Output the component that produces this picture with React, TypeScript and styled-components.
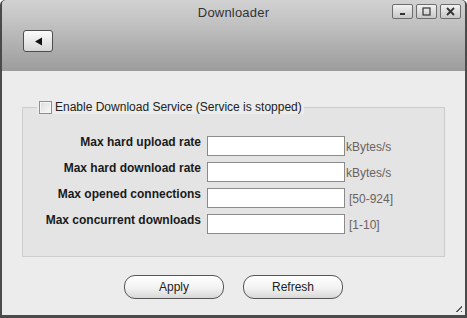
import styled, { createGlobalStyle } from "styled-components";

const Global = createGlobalStyle`
  html, body { margin: 0; padding: 0; background: #fff; }
  body { font-family: "Liberation Sans", Arial, sans-serif; }
`;

const Window = styled.div`
  width: 467px;
  height: 318px;
  box-sizing: border-box;
  display: flex;
  flex-direction: column;
  background: #4a4a4a;
  border-radius: 5px 5px 0 0;
  padding: 0 2px 3px 2px;
  overflow: hidden;
`;

const Header = styled.div`
  height: 71px;
  background: linear-gradient(#d2d2d2, #c3c3c3 30%, #9c9c9c);
  border-radius: 4px 4px 0 0;
  display: flex;
  flex-direction: column;
`;

const TitleBar = styled.div`
  height: 24px;
  display: flex;
  align-items: center;
  justify-content: center;
  position: relative;
  font-size: 13px;
  color: #333;
  letter-spacing: 0.2px;
`;

const WinControls = styled.div`
  position: absolute;
  right: 4px;
  top: 4px;
  display: flex;
  gap: 3px;
`;

const WinButton = styled.div`
  width: 21px;
  height: 15px;
  box-sizing: border-box;
  border: 1px solid #6d6d6d;
  border-radius: 2px;
  background: linear-gradient(#f2f2f2, #c8c8c8);
  display: flex;
  align-items: center;
  justify-content: center;
`;

const Toolbar = styled.div`
  padding: 6px 0 0 21px;
`;

const BackButton = styled.div`
  width: 30px;
  height: 22px;
  box-sizing: border-box;
  border: 1px solid #4d4d4d;
  border-radius: 3px;
  background: linear-gradient(#fbfbfb, #d6d6d6);
  display: flex;
  align-items: center;
  justify-content: center;
`;

const Content = styled.div`
  flex: 1;
  position: relative;
  background: #ececec;
  display: flex;
  flex-direction: column;
  padding: 29px 20px 0 20px;
`;

const Fieldset = styled.fieldset`
  margin: 0;
  padding: 22px 0 16px 0;
  border: 1px solid #cdcdcd;
  background: #e4e4e4;
  height: 157px;
  box-sizing: border-box;
  display: flex;
  flex-direction: column;
  gap: 6px;
`;

const Legend = styled.legend`
  margin-left: 14px;
  padding: 0 2px;
  display: flex;
  align-items: center;
  gap: 3px;
  font-size: 12px;
  color: #222;
  background: #ececec;
`;

const Check = styled.span`
  width: 11px;
  height: 11px;
  border: 1px solid #8e8e8e;
  background: linear-gradient(135deg, #dcdcdc, #fafafa);
  box-shadow: inset 0 0 0 1px #f4f4f4;
  display: inline-block;
`;

const Row = styled.div`
  display: grid;
  grid-template-columns: 184px 138px auto;
  align-items: center;
  height: 20px;
`;

const Label = styled.label`
  text-align: right;
  padding-right: 6px;
  font-size: 12px;
  font-weight: bold;
  color: #1a1a1a;
  transform: translateY(-4px);
`;

const Field = styled.input`
  width: 138px;
  height: 20px;
  box-sizing: border-box;
  border: 1px solid #8a8a8a;
  background: #fff;
  margin: 0;
`;

const Unit = styled.span<{ $pad?: number }>`
  font-size: 12px;
  color: #6a6360;
  margin-left: ${(p) => p.$pad ?? 0}px;
  margin-top: 2px;
`;

const Actions = styled.div`
  display: flex;
  justify-content: center;
  gap: 19px;
  padding-top: 18px;
`;

const PillButton = styled.button`
  width: 100px;
  height: 24px;
  border: 1px solid #555;
  border-radius: 11px;
  background: linear-gradient(#ffffff, #f2f2f2 55%, #d8d8d8);
  font-family: "Liberation Sans", Arial, sans-serif;
  font-size: 12px;
  color: #222;
  padding: 0;
`;

const Grip = styled.div`
  position: absolute;
  right: 3px;
  bottom: 3px;
  width: 8px;
  height: 8px;
  background: repeating-linear-gradient(135deg, transparent 0 1px, #555 1px 2px, transparent 2px 3px);
  clip-path: polygon(100% 0, 100% 100%, 0 100%);
`;

const rows = [
  { label: "Max hard upload rate", unit: "kBytes/s", pad: 1 },
  { label: "Max hard download rate", unit: "kBytes/s", pad: 1 },
  { label: "Max opened connections", unit: "[50-924]", pad: 4 },
  { label: "Max concurrent downloads", unit: "[1-10]", pad: 4 },
];

export default function App() {
  return (
    <>
      <Global />
      <Window>
        <Header>
          <TitleBar>
            Downloader
            <WinControls>
              <WinButton>
                <svg width="9" height="9" viewBox="0 0 9 9">
                  <rect x="2" y="6" width="5" height="2" fill="#333" />
                </svg>
              </WinButton>
              <WinButton>
                <svg width="9" height="9" viewBox="0 0 9 9">
                  <rect x="1" y="1" width="7" height="7" fill="none" stroke="#333" strokeWidth="1.2" />
                </svg>
              </WinButton>
              <WinButton>
                <svg width="9" height="9" viewBox="0 0 9 9">
                  <path d="M1 1 L8 8 M8 1 L1 8" stroke="#333" strokeWidth="1.8" />
                </svg>
              </WinButton>
            </WinControls>
          </TitleBar>
          <Toolbar>
            <BackButton>
              <svg width="9" height="9" viewBox="0 0 9 9">
                <path d="M1 4.5 L8 0.5 L8 8.5 Z" fill="#111" />
              </svg>
            </BackButton>
          </Toolbar>
        </Header>
        <Content>
          <Fieldset>
            <Legend>
              <Check />
              Enable Download Service (Service is stopped)
            </Legend>
            {rows.map((r) => (
              <Row key={r.label}>
                <Label>{r.label}</Label>
                <Field type="text" />
                <Unit $pad={r.pad}>{r.unit}</Unit>
              </Row>
            ))}
          </Fieldset>
          <Actions>
            <PillButton>Apply</PillButton>
            <PillButton>Refresh</PillButton>
          </Actions>
          <Grip />
        </Content>
      </Window>
    </>
  );
}
